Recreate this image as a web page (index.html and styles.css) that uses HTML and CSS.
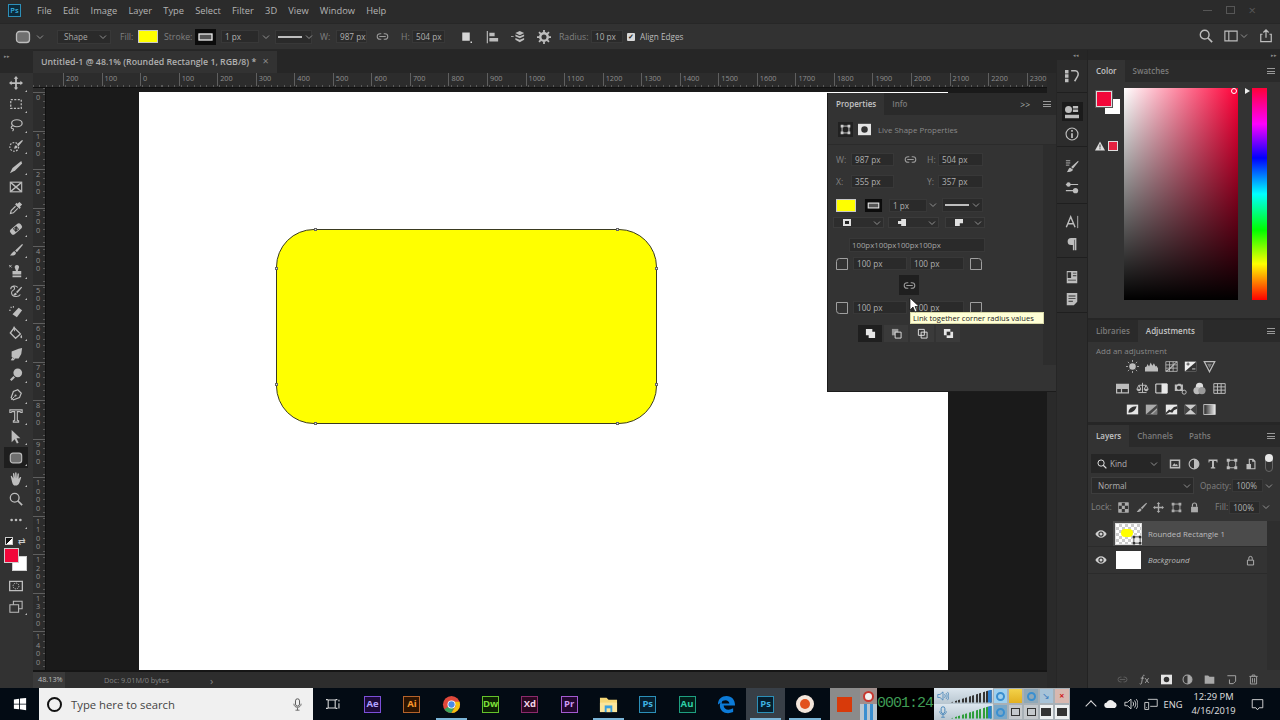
FILE: index.html
```html
<!DOCTYPE html>
<html lang="en">
<head>
<meta charset="utf-8">
<title>Photoshop</title>
<link rel="stylesheet" href="styles.css">
</head>
<body>
<svg class="defs" aria-hidden="true">
  <symbol id="i-move" viewBox="0 0 16 16"><path fill="currentColor" d="M8 0l2.600 3H9v4h4V5.400L16 8l-3 2.600V9H9v4h1.600L8 16l-2.600-3H7V9H3v1.600L0 8l3-2.600V7h4V3H5.400z"/></symbol>
  <symbol id="i-marquee" viewBox="0 0 16 16"><rect x="2" y="3" width="12" height="10" fill="none" stroke="currentColor" stroke-width="1.400" stroke-dasharray="2.400 1.600"/></symbol>
  <symbol id="i-square" viewBox="0 0 16 16"><rect x="3" y="2" width="10" height="11" fill="currentColor"/><path d="M14 14h2v2h-2z" fill="currentColor"/></symbol>
  <symbol id="i-lasso" viewBox="0 0 16 16"><ellipse cx="9" cy="6" rx="6" ry="4" fill="none" stroke="currentColor" stroke-width="1.400"/><path d="M4 9c-2 1-2 3 0 3s1 2 0 3" fill="none" stroke="currentColor" stroke-width="1.300"/></symbol>
  <symbol id="i-quick" viewBox="0 0 16 16"><circle cx="6" cy="9" r="5" fill="none" stroke="currentColor" stroke-width="1.400" stroke-dasharray="2 1.500"/><path fill="currentColor" d="M15 1L9 6l2 2 5-6zM8 7c-2 1-2 3-2 4 2 0 3-1 4-2z"/></symbol>
  <symbol id="i-slice" viewBox="0 0 16 16"><path fill="currentColor" d="M14 1l1 3-8 8-6 3 3-6z"/></symbol>
  <symbol id="i-frame" viewBox="0 0 16 16"><rect x="1.500" y="2.500" width="13" height="11" fill="none" stroke="currentColor" stroke-width="1.300"/><path d="M2 3l12 10M14 3L2 13" stroke="currentColor" stroke-width="1.500"/></symbol>
  <symbol id="i-dropper" viewBox="0 0 16 16"><path fill="currentColor" d="M12 1l3 3-2.500 2.500 1 1-1.500 1.500-5-5L8.500 2l1 1z"/><path fill="none" stroke="currentColor" stroke-width="1.300" d="M7.500 6L2.500 11l-.8 3.300 3.300-.8 5-5"/></symbol>
  <symbol id="i-heal" viewBox="0 0 16 16"><g transform="rotate(-40 8 8)"><rect x="0.500" y="4.500" width="15" height="7" rx="2.500" fill="currentColor"/><rect x="5.500" y="5.500" width="5" height="5" fill="#333"/><circle cx="7" cy="7" r=".6" fill="#ddd"/><circle cx="9" cy="9" r=".6" fill="#ddd"/></g></symbol>
  <symbol id="i-brush" viewBox="0 0 16 16"><path fill="currentColor" d="M15 1L7 8.500l2 2L16 2zM6.500 9.500C4 9.500 3.500 12.500 1 14c3 1 7 0 7-3z"/></symbol>
  <symbol id="i-stamp" viewBox="0 0 16 16"><path fill="currentColor" d="M9 1a2.500 2.500 0 0 1 2 4l-1 3h4v4H4V8h4L7 5a2.500 2.500 0 0 1 2-4zM4 13h10v2H4z"/><path d="M0 1l3 3M3 1L0 4" stroke="currentColor" stroke-width="1"/></symbol>
  <symbol id="i-history" viewBox="0 0 16 16"><path fill="none" stroke="currentColor" stroke-width="1.200" d="M2 6c0-4 6-5 8-2M3 3c3-1 5 2 2 4-2 1-3 3-1 6 2 2 7 2 9-1"/><path fill="currentColor" d="M14 3L8 9l1.500 1.500L15 4zM7.500 10c-1 0-2 2-3 3 2 .5 4 0 4.500-1.500z"/></symbol>
  <symbol id="i-eraser" viewBox="0 0 16 16"><path fill="currentColor" d="M11 3l4 3-6 8-5-3.500z"/><path d="M2 2l.8 1.500M0 6h2M5 1v2" stroke="currentColor" stroke-width="1.200"/></symbol>
  <symbol id="i-bucket" viewBox="0 0 16 16"><path fill="none" stroke="currentColor" stroke-width="1.500" d="M6 2L1.500 8l6 6L13 9z"/><path fill="currentColor" d="M14 10c-1 2-1.500 3-.2 4 1.500 0 1.700-2 .2-4zM5 1l1-1 1 6H6z"/></symbol>
  <symbol id="i-smudge" viewBox="0 0 16 16"><path fill="currentColor" d="M15 1l-1 7-3 5H5L3 11V5l8-3zM4 12l-2 3 3 .5 2-2z"/></symbol>
  <symbol id="i-dodge" viewBox="0 0 16 16"><circle cx="10" cy="5.500" r="5" fill="currentColor"/><path d="M6 10l-4 4" stroke="currentColor" stroke-width="2.400"/></symbol>
  <symbol id="i-pen" viewBox="0 0 16 16"><path fill="none" stroke="currentColor" stroke-width="1.400" d="M10 2l4 4-2 5-7 2.500L2.500 11 5 4z"/><circle cx="7.500" cy="8.500" r="1.200" fill="currentColor"/><path d="M2.500 13.500l4-4" stroke="currentColor"/></symbol>
  <symbol id="i-type" viewBox="0 0 16 16"><path fill="none" stroke="currentColor" stroke-width="1.300" d="M1 1h14v3h-1.500l-.8-1H9.500v10l1.500.6V15H5v-1.400l1.500-.6V3H3.300l-.8 1H1z"/></symbol>
  <symbol id="i-arrow" viewBox="0 0 16 16"><path fill="currentColor" d="M3 0v14l3.500-3.500 2.500 5 2-1-2.400-5H13z"/></symbol>
  <symbol id="i-rrect" viewBox="0 0 16 16"><rect x="1.500" y="2.500" width="13" height="11" rx="3" fill="#6f6f6f" stroke="currentColor" stroke-width="1.300"/></symbol>
  <symbol id="i-hand" viewBox="0 0 16 16"><path fill="currentColor" d="M3 9l-1-4c0-1 1.300-1 1.500 0L5 7.500 4.500 2c0-1 1.500-1 1.600 0L7 7V1c0-1 1.600-1 1.600 0L9 7l.8-5c.2-1 1.600-.8 1.500.2L11 8l1.500-2c.7-.8 1.800 0 1.300.9L12 12c-1 2.500-2 3.500-4.500 3.500S4 14 3 9z"/></symbol>
  <symbol id="i-zoom" viewBox="0 0 16 16"><circle cx="6.500" cy="6.500" r="5" fill="none" stroke="currentColor" stroke-width="1.500"/><path d="M10 10l5 5" stroke="currentColor" stroke-width="2"/></symbol>
  <symbol id="i-dots" viewBox="0 0 16 16"><circle cx="3" cy="8" r="1.500" fill="currentColor"/><circle cx="8" cy="8" r="1.500" fill="currentColor"/><circle cx="13" cy="8" r="1.500" fill="currentColor"/></symbol>
  <symbol id="i-quickmask" viewBox="0 0 16 16"><path fill="currentColor" fill-rule="evenodd" d="M0 2h16v12H0zM1.500 3.500v9h13v-9z"/><circle cx="8" cy="8" r="3.300" fill="none" stroke="currentColor" stroke-width="1.100" stroke-dasharray="1.500 1"/></symbol>
  <symbol id="i-screen" viewBox="0 0 16 16"><path fill="#333" stroke="currentColor" stroke-width="1.200" d="M5 1.500h10v8.500H5z"/><path fill="#333" stroke="currentColor" stroke-width="1.200" d="M1 5.500h10v8.500H1z"/></symbol>
  <symbol id="i-chev" viewBox="0 0 8 8"><path d="M1 2.500l3 3 3-3" fill="none" stroke="currentColor" stroke-width="1"/></symbol>
  <symbol id="i-link" viewBox="0 0 16 10"><path fill="none" stroke="currentColor" stroke-width="1.300" d="M6.500 1.500H5a3.500 3.500 0 0 0 0 7h1.500M9.500 1.500H11a3.500 3.500 0 0 1 0 7H9.500M4 5h8"/></symbol>
  <symbol id="i-stroke" viewBox="0 0 21 16"><rect width="21" height="16" fill="#0c0c0c"/><rect x="4" y="5" width="13" height="6" fill="#555" stroke="#eee" stroke-width="1.300"/></symbol>
  <symbol id="i-line" viewBox="0 0 24 4"><path d="M0 2h24" stroke="#fff" stroke-width="1.400"/></symbol>
  <symbol id="i-align" viewBox="0 0 16 16"><path fill="currentColor" d="M2 1h1.300v14H2zM5 3h6v4H5zM5 9h10v4H5z"/></symbol>
  <symbol id="i-stack" viewBox="0 0 16 16"><path fill="currentColor" d="M10 1l5 2.500L10 6 5 3.500zM10 7l5-2v2l-5 2.500L5 7V5zM10 11l5-2v2l-5 3-5-3V9zM0 7h3v1H0z"/></symbol>
  <symbol id="i-gear" viewBox="0 0 16 16"><circle cx="8" cy="8" r="4.300" fill="none" stroke="currentColor" stroke-width="2.800"/><path d="M8 0v3M8 13v3M0 8h3M13 8h3M2.300 2.300l2 2M11.700 11.700l2 2M13.700 2.300l-2 2M4.300 11.700l-2 2" stroke="currentColor" stroke-width="2"/></symbol>
  <symbol id="i-search" viewBox="0 0 16 16"><circle cx="6.500" cy="6.500" r="5" fill="none" stroke="currentColor" stroke-width="1.600"/><path d="M10 10l5 5" stroke="currentColor" stroke-width="2"/></symbol>
  <symbol id="i-workspace" viewBox="0 0 16 16"><path fill="none" stroke="currentColor" stroke-width="1.300" d="M1 2.500h14v11H1zM5.500 3v10"/></symbol>
  <symbol id="i-share" viewBox="0 0 16 16"><path fill="none" stroke="currentColor" stroke-width="1.400" d="M4 6H2v8.500h12V6h-2M8 10V1M5 4l3-3 3 3"/></symbol>
  <symbol id="i-hist" viewBox="0 0 16 16"><path fill="currentColor" d="M0 1h4v4H0zM0 6h4v4H0zM0 11h4v4H0z"/><path fill="none" stroke="currentColor" stroke-width="1.700" d="M7 2h5c3 0 4 4 2 7l-3 5"/></symbol>
  <symbol id="i-props" viewBox="0 0 16 16"><circle cx="4" cy="5" r="4" fill="currentColor"/><path fill="currentColor" d="M9 1h6v3H9zM9 5h6v3H9zM0 11h16v4H0z"/></symbol>
  <symbol id="i-info" viewBox="0 0 16 16"><circle cx="8" cy="8" r="6.800" fill="none" stroke="currentColor" stroke-width="1.300"/><path fill="currentColor" d="M7 3.500h2v2H7zM7 7h2v5.500H7z"/></symbol>
  <symbol id="i-brushset" viewBox="0 0 16 16"><path fill="currentColor" d="M15 2L7 9l2 2 6.500-8zM6 10c-2 0-2 3-4 5 4 0 7-1 7-3z"/><path d="M1 2h5M1 4.500h5M1 7h4" stroke="currentColor"/></symbol>
  <symbol id="i-sliders" viewBox="0 0 16 16"><path d="M1 4h14M1 11h14" stroke="currentColor" stroke-width="1.300"/><circle cx="4" cy="4" r="2.500" fill="currentColor"/><circle cx="12" cy="11" r="3" fill="currentColor"/></symbol>
  <symbol id="i-charA" viewBox="0 0 16 16"><path fill="none" stroke="currentColor" stroke-width="1.600" d="M1.500 14L6.500 2l5 12M3.500 10h6"/><path d="M14.500 1v14" stroke="currentColor"/></symbol>
  <symbol id="i-para" viewBox="0 0 16 16"><path fill="currentColor" d="M13 1H7a4 4 0 0 0 0 8h2v6h1.800V3h.6v12H13z"/></symbol>
  <symbol id="i-glyph" viewBox="0 0 16 16"><path fill="currentColor" fill-rule="evenodd" d="M2 1h12v14H2zM3 2.500V9h4V2.500zM9 3v1h4V3zM9 6v1h4V6zM3.500 11v1h9v-1z"/></symbol>
  <symbol id="i-note" viewBox="0 0 16 16"><path fill="currentColor" fill-rule="evenodd" d="M2 1h12v10l-4 4H2zM4 4v1h8V4zM4 7v1h8V7zM4 10v1h5v-1z"/></symbol>
  <symbol id="i-cornerTL" viewBox="0 0 12 12"><path fill="none" stroke="currentColor" d="M3.500.5h8v11H.5V3.500a3 3 0 0 1 3-3z"/></symbol>
  <symbol id="i-cornerTR" viewBox="0 0 12 12"><path fill="none" stroke="currentColor" d="M.5.5h8a3 3 0 0 1 3 3v8H.5z"/></symbol>
  <symbol id="i-cornerBL" viewBox="0 0 12 12"><path fill="none" stroke="currentColor" d="M.5.5h11v11h-8a3 3 0 0 1-3-3z"/></symbol>
  <symbol id="i-cornerBR" viewBox="0 0 12 12"><path fill="none" stroke="currentColor" d="M.5.5h11v8a3 3 0 0 1-3 3h-8z"/></symbol>
  <symbol id="i-transform" viewBox="0 0 16 16"><rect x="3" y="3" width="10" height="10" fill="none" stroke="currentColor" stroke-width="1.300"/><path fill="currentColor" d="M1 1h4v4H1zM11 1h4v4h-4zM1 11h4v4H1zM11 11h4v4h-4z"/></symbol>
  <symbol id="i-mask" viewBox="0 0 16 16"><path fill="#e4e4e4" d="M0 1h16v14H0z"/><circle cx="8" cy="8" r="4" fill="#333"/></symbol>
  <symbol id="i-alert" viewBox="0 0 10 10"><path fill="#ddd" d="M5 .5l5 9H0z"/><path fill="#333" d="M4.500 3.500h1v3h-1zM4.500 7.200h1v1h-1z"/></symbol>
  <symbol id="i-op1" viewBox="0 0 12 12"><path fill="#e6e6e6" d="M1 1h7v3h3v7H4V8H1z"/></symbol>
  <symbol id="i-op2" viewBox="0 0 12 12"><path fill="#999" d="M1 1h7v7H1z"/><path fill="#333" stroke="#e6e6e6" d="M4.500 4.500h6.500v6.500H4.500z"/></symbol>
  <symbol id="i-op3" viewBox="0 0 12 12"><path fill="none" stroke="#e6e6e6" d="M1.500 1.500h6.500v6.500H1.500zM4.500 4.500h6.500v6.500H4.500z"/></symbol>
  <symbol id="i-op4" viewBox="0 0 12 12"><path fill="#e6e6e6" d="M1 1h7v3h3v7H4V8H1z"/><path fill="#333" d="M4 4h4v4H4z"/></symbol>
  <symbol id="i-sun" viewBox="0 0 16 16"><circle cx="8" cy="8" r="4" fill="currentColor"/><path stroke="currentColor" d="M8 0v2.500M8 13.500V16M0 8h2.500M13.500 8H16M2.300 2.300L4 4M12 12l1.700 1.700M13.700 2.300L12 4M4 12l-1.700 1.700"/></symbol>
  <symbol id="i-levels" viewBox="0 0 16 16"><path fill="currentColor" d="M0 14V9l2-1 1-3 2 3 2-5 2 4 2-3 2 4 1-1 2 3v4z"/></symbol>
  <symbol id="i-curves" viewBox="0 0 16 16"><path fill="none" stroke="currentColor" d="M1 2h14v12H1zM1 6h14M1 10h14M5.500 2v12M10 2v12"/><path fill="none" stroke="currentColor" stroke-width="1.300" d="M1 14C7 12 9 6 15 2"/></symbol>
  <symbol id="i-expo" viewBox="0 0 16 16"><path fill="#eee" d="M1 2h14v12H1z"/><path fill="#333" d="M1 14L15 2v12z"/><path stroke="#333" d="M3 5h4M5 3v4"/><path stroke="#eee" d="M10 11h4"/></symbol>
  <symbol id="i-vibr" viewBox="0 0 16 16"><path fill="none" stroke="currentColor" stroke-width="1.500" d="M1.500 2h13L8 14.500z"/><path fill="currentColor" d="M5 4.500h6L8 10z" opacity=".5"/></symbol>
  <symbol id="i-hsl" viewBox="0 0 16 16"><path fill="currentColor" fill-rule="evenodd" d="M0 2h16v12H0zM1.500 8.500v4H6v-4zM7.500 8.500v4h7v-4z"/></symbol>
  <symbol id="i-balance" viewBox="0 0 16 16"><path fill="none" stroke="currentColor" stroke-width="1.200" d="M8 1v12M3 13h10M3.500 4L1 9h5zM12.500 4L10 9h5zM3.500 4h9"/><path fill="currentColor" d="M1 9a2.500 2.500 0 0 0 5 0zM10 9a2.500 2.500 0 0 0 5 0z"/></symbol>
  <symbol id="i-bw" viewBox="0 0 16 16"><path fill="#e8e8e8" d="M8 2h7v12H8z"/><path fill="none" stroke="#e8e8e8" stroke-width="1.200" d="M1 2.500h14v11H1z"/></symbol>
  <symbol id="i-camera" viewBox="0 0 16 16"><path fill="currentColor" fill-rule="evenodd" d="M1 3h3l1-1h3l1 1h2v8H1zM6 4.500a2.500 2.500 0 1 0 0 5 2.500 2.500 0 0 0 0-5z"/><circle cx="12.500" cy="12.500" r="2.500" fill="none" stroke="currentColor" stroke-width="1.200"/></symbol>
  <symbol id="i-mixer" viewBox="0 0 16 16"><circle cx="8" cy="5.500" r="4.500" fill="#ddd"/><circle cx="5" cy="10.500" r="4.500" fill="#bbb"/><circle cx="11" cy="10.500" r="4.500" fill="#999"/></symbol>
  <symbol id="i-lookup" viewBox="0 0 16 16"><path fill="none" stroke="currentColor" stroke-width="1.200" d="M1 2h14v12H1zM1 6h14M1 10h14M5.500 2v12M10 2v12"/></symbol>
  <symbol id="i-inv" viewBox="0 0 16 16"><path fill="#e6e6e6" d="M1 2h14v12H1z"/><path fill="#333" d="M3 12c0-4 3-8 10-8-1 4-4 8-10 8z"/></symbol>
  <symbol id="i-post" viewBox="0 0 16 16"><path fill="#aaa" d="M1 2h14v12H1z"/><path fill="#444" d="M1 14L15 2v4L6 14z"/><path fill="#777" d="M15 8v6H9z"/></symbol>
  <symbol id="i-thresh" viewBox="0 0 16 16"><path fill="#e8e8e8" d="M1 2h14v12H1z"/><path fill="#333" d="M1 12l4-4 2 1 4-4 4-1v3l-4 2-2 3-3-1-5 3z"/></symbol>
  <symbol id="i-selcol" viewBox="0 0 16 16"><path fill="#ccc" d="M1 2h14v12H1z"/><path fill="#444" d="M1 2l7 6-7 6zM15 2L8 8l7 6z"/></symbol>
  <symbol id="i-gradmap" viewBox="0 0 16 16"><defs><linearGradient id="gm"><stop offset="0" stop-color="#222"/><stop offset="1" stop-color="#eee"/></linearGradient></defs><rect x="1" y="2" width="14" height="12" fill="url(#gm)" stroke="#ddd"/></symbol>
  <symbol id="i-eye" viewBox="0 0 16 12"><path fill="currentColor" fill-rule="evenodd" d="M8 1c3.500 0 6 2.500 7.500 5C14 8.500 11.500 11 8 11S2 8.500.5 6C2 3.500 4.500 1 8 1zm0 1.500a3.500 3.500 0 1 0 0 7 3.500 3.500 0 0 0 0-7z"/><circle cx="8" cy="6" r="2" fill="currentColor"/></symbol>
  <symbol id="i-image" viewBox="0 0 16 16"><path fill="currentColor" fill-rule="evenodd" d="M1 2h14v12H1zM3 4v8h10V4z"/><path fill="currentColor" d="M4 11l3-4 2 2 1.500-1 1.500 3z"/></symbol>
  <symbol id="i-adj" viewBox="0 0 16 16"><circle cx="8" cy="8" r="6.500" fill="none" stroke="currentColor" stroke-width="1.500"/><path fill="currentColor" d="M8 1.500a6.500 6.500 0 0 1 0 13z M3 12L13 4"/></symbol>
  <symbol id="i-t" viewBox="0 0 16 16"><path fill="currentColor" d="M2 2h12v4h-1l-.6-2H9.300v8l1.700.7V14H5v-1.300l1.700-.7V4H3.600L3 6H2z"/></symbol>
  <symbol id="i-smart" viewBox="0 0 16 16"><path fill="currentColor" fill-rule="evenodd" d="M5 1h6l3 3v11H2V8h3zM6.500 2.500V8H8v5.500h4.500V5h-3V2.500z"/></symbol>
  <symbol id="i-checker" viewBox="0 0 16 16"><path fill="currentColor" d="M1 1h4.500v4.500H1zM5.500 5.500H10V10H5.500zM10 1h5v4.500h-5zM1 10h4.500v5H1zM10 10h5v5h-5z"/><rect x="1" y="1" width="14" height="14" fill="none" stroke="currentColor"/></symbol>
  <symbol id="i-lock" viewBox="0 0 16 16"><path fill="currentColor" d="M3 7h10v8H3z"/><path fill="none" stroke="currentColor" stroke-width="1.700" d="M5 7V4.500a3 3 0 0 1 6 0V7"/></symbol>
  <symbol id="i-lockline" viewBox="0 0 16 16"><path fill="none" stroke="currentColor" stroke-width="1.300" d="M3.500 7.500h9v7h-9zM5.500 7V4.500a2.500 2.500 0 0 1 5 0V7"/></symbol>
  <symbol id="i-fx" viewBox="0 0 16 16"><path fill="none" stroke="currentColor" stroke-width="1.300" d="M8 2C6 1 5.500 3 5 6l-1.200 7C3.500 15 2 15 1 14M2.500 6H7.500M9 6l5 7M14 6l-5 7"/></symbol>
  <symbol id="i-folder" viewBox="0 0 16 16"><path fill="currentColor" d="M1 2h5l2 2h7v10H1z"/></symbol>
  <symbol id="i-new" viewBox="0 0 16 16"><path fill="none" stroke="currentColor" stroke-width="1.400" d="M2 2.500h12v8l-3.500 3.500H5V8"/></symbol>
  <symbol id="i-trash" viewBox="0 0 16 16"><path fill="none" stroke="currentColor" stroke-width="1.300" d="M3.500 4v10.500h9V4M2 3.500h12M6 3V1.500h4V3M6.500 6v6.500M9.500 6v6.500"/></symbol>
  <symbol id="i-win" viewBox="0 0 16 16"><path fill="currentColor" d="M1 2.800l6-.8v5.600H1zM8 1.800L15 1v6.600H8zM1 8.500h6v5.600l-6-.8zM8 8.500h7V15l-7-.9z"/></symbol>
  <symbol id="i-mic" viewBox="0 0 16 16"><rect x="5.500" y="1" width="5" height="9" rx="2.500" fill="none" stroke="currentColor" stroke-width="1.200"/><path d="M3.500 7c0 6 9 6 9 0M8 12v3M5.500 15h5" fill="none" stroke="currentColor"/></symbol>
  <symbol id="i-task" viewBox="0 0 16 16"><path fill="none" stroke="currentColor" stroke-width="1.200" d="M2.500 3.500h8v9h-8zM0 3h2M0 13h2M11 3h2M11 13h2"/><path d="M14.800 3v2M14.800 7v6" stroke="currentColor" stroke-width="1.200"/></symbol>
  <symbol id="i-speaker" viewBox="0 0 16 16"><path fill="none" stroke="currentColor" d="M1 6h3l4-3.500v11L4 10H1zM10 5.500c1.300 1.500 1.300 3.500 0 5M12 4c2 2.500 2 5.500 0 8M14 2.500c2.500 3 2.500 8 0 11"/></symbol>
  <symbol id="i-cloud" viewBox="0 0 18 12"><path fill="currentColor" d="M4 11a3.500 3.500 0 0 1-.5-7A5.500 5.500 0 0 1 13 3.500 4 4 0 0 1 14 11z"/></symbol>
  <symbol id="i-net" viewBox="0 0 18 16"><path fill="none" stroke="currentColor" stroke-width="1.100" d="M5 2h12v9H8M1 6h5v9H1zM3 12.500h1"/></symbol>
  <symbol id="i-notify" viewBox="0 0 16 16"><path fill="none" stroke="currentColor" stroke-width="1.100" d="M1.500 2h13v10H10l-2 2.500L6 12H1.500z"/></symbol>
</svg>

<div class="app">
  <header class="menubar">
    <span class="pslogo">Ps</span>
    <nav class="menus">
      <span>File</span><span>Edit</span><span>Image</span><span>Layer</span><span>Type</span><span>Select</span><span>Filter</span><span>3D</span><span>View</span><span>Window</span><span>Help</span>
    </nav>
    <div class="winctl"><i class="wmin"></i><i class="wmax"></i><i class="wclose">×</i></div>
  </header>

  <div class="options">
    <svg class="ico16 o-shape"><use href="#i-rrect"/></svg>
    <svg class="chev o-chev1"><use href="#i-chev"/></svg>
    <div class="drop o-sel"><span>Shape</span><svg class="chev"><use href="#i-chev"/></svg></div>
    <label class="lbl o-fill">Fill:</label>
    <div class="swatch o-swatch"></div>
    <label class="lbl o-stroke">Stroke:</label>
    <svg class="strokeic o-strokeic"><use href="#i-stroke"/></svg>
    <div class="field o-w1">1 px</div>
    <svg class="chev o-chev2"><use href="#i-chev"/></svg>
    <div class="linebox o-line"><svg class="lineic"><use href="#i-line"/></svg><svg class="chev"><use href="#i-chev"/></svg></div>
    <label class="lbl o-wl">W:</label>
    <div class="field o-wv">987 px</div>
    <svg class="linkic o-link"><use href="#i-link"/></svg>
    <label class="lbl o-hl">H:</label>
    <div class="field o-hv">504 px</div>
    <svg class="ico12 o-pop"><use href="#i-square"/></svg>
    <svg class="ico14 o-align"><use href="#i-align"/></svg>
    <svg class="ico14 o-stack"><use href="#i-stack"/></svg>
    <svg class="ico14 o-gear"><use href="#i-gear"/></svg>
    <label class="lbl o-rad">Radius:</label>
    <div class="field o-radv">10 px</div>
    <span class="check o-check">✓</span>
    <span class="bright o-edges">Align Edges</span>
    <div class="o-right">
      <svg class="ico14 o-r-search"><use href="#i-search"/></svg>
      <svg class="ico14"><use href="#i-workspace"/></svg>
      <svg class="chev"><use href="#i-chev"/></svg>
      <svg class="ico14 o-share"><use href="#i-share"/></svg>
    </div>
  </div>

  <main class="work">
    <aside class="toolbar">
      <div class="tool-top"><b>▸▸</b></div>
      <div class="tool more"><svg><use href="#i-move"/></svg></div>
      <div class="tool more"><svg><use href="#i-marquee"/></svg></div>
      <div class="tool more"><svg><use href="#i-lasso"/></svg></div>
      <div class="tool more"><svg><use href="#i-quick"/></svg></div>
      <div class="tool more"><svg><use href="#i-slice"/></svg></div>
      <div class="tool"><svg><use href="#i-frame"/></svg></div>
      <div class="tool more"><svg><use href="#i-dropper"/></svg></div>
      <div class="tool more"><svg><use href="#i-heal"/></svg></div>
      <div class="tool more"><svg><use href="#i-brush"/></svg></div>
      <div class="tool more"><svg><use href="#i-stamp"/></svg></div>
      <div class="tool more"><svg><use href="#i-history"/></svg></div>
      <div class="tool more"><svg><use href="#i-eraser"/></svg></div>
      <div class="tool more"><svg><use href="#i-bucket"/></svg></div>
      <div class="tool more"><svg><use href="#i-smudge"/></svg></div>
      <div class="tool more"><svg><use href="#i-dodge"/></svg></div>
      <div class="tool more"><svg><use href="#i-pen"/></svg></div>
      <div class="tool more"><svg><use href="#i-type"/></svg></div>
      <div class="tool more"><svg><use href="#i-arrow"/></svg></div>
      <div class="tool more active"><svg><use href="#i-rrect"/></svg></div>
      <div class="tool more"><svg><use href="#i-hand"/></svg></div>
      <div class="tool"><svg><use href="#i-zoom"/></svg></div>
      <div class="tool more"><svg><use href="#i-dots"/></svg></div>
      <div class="mini"><span class="mini-def"></span><span class="mini-swap">⇄</span></div>
      <div class="colors"><span class="c-bg"></span><span class="c-fg"></span></div>
      <div class="tool tool-q"><svg><use href="#i-quickmask"/></svg></div>
      <div class="tool more"><svg><use href="#i-screen"/></svg></div>
    </aside>

    <section class="center">
      <div class="tabs">
        <div class="tab">Untitled-1 @ 48.1% (Rounded Rectangle 1, RGB/8) * <span class="tabx">×</span></div>
      </div>
      <div class="doc">
        <div class="hruler">
          <span>200</span><span>100</span><span>0</span><span>100</span><span>200</span><span>300</span><span>400</span><span>500</span><span>600</span><span>700</span><span>800</span><span>900</span><span>1000</span><span>1100</span><span>1200</span><span>1300</span><span>1400</span><span>1500</span><span>1600</span><span>1700</span><span>1800</span><span>1900</span><span>2000</span><span>2100</span><span>2200</span><span>2300</span>
        </div>
        <div class="docrow">
          <div class="vruler">
            <span>0</span><span>100</span><span>200</span><span>300</span><span>400</span><span>500</span><span>600</span><span>700</span><span>800</span><span>900</span><span>1000</span><span>1100</span><span>1200</span><span>1300</span><span>1400</span>
          </div>
          <div class="canvas">
            <div class="paper"></div>
            <div class="rrect">
              <i class="pt p1"></i><i class="pt p2"></i><i class="pt p3"></i><i class="pt p4"></i>
              <i class="pt p5"></i><i class="pt p6"></i><i class="pt p7"></i><i class="pt p8"></i>
            </div>
          </div>
        </div>
        <div class="status"><span class="zoomv">48.13%</span><span class="docinfo">Doc: 9.01M/0 bytes</span><span class="statarrow">›</span></div>
      </div>

      <div class="props">
        <div class="ptabs">
          <span class="ptab on">Properties</span><span class="ptab">Info</span>
          <span class="ptools">&gt;&gt; <i class="burger"></i></span>
        </div>
        <div class="plive">
          <span class="pbtn"><svg><use href="#i-transform"/></svg></span>
          <svg class="pmask"><use href="#i-mask"/></svg>
          <span>Live Shape Properties</span>
        </div>
        <div class="pbody">
          <div class="prow r-wh">
            <label class="lbl pl">W:</label><div class="field pw">987 px</div>
            <svg class="linkic plink"><use href="#i-link"/></svg>
            <label class="lbl pl2">H:</label><div class="field pw2">504 px</div>
          </div>
          <div class="prow r-xy">
            <label class="lbl pl">X:</label><div class="field pw">355 px</div>
            <span class="plink"></span>
            <label class="lbl pl2">Y:</label><div class="field pw2">357 px</div>
          </div>
          <div class="prow r-stroke">
            <div class="swatch pswatch"></div>
            <svg class="strokeic"><use href="#i-stroke"/></svg>
            <div class="field p1px">1 px</div>
            <svg class="chev pchev"><use href="#i-chev"/></svg>
            <div class="linebox pline"><svg class="lineic"><use href="#i-line"/></svg><svg class="chev"><use href="#i-chev"/></svg></div>
          </div>
          <div class="prow r-sel">
            <div class="minidrop md1"><i class="glyph g1"></i><svg class="chev"><use href="#i-chev"/></svg></div>
            <div class="minidrop md2"><i class="glyph g2"></i><svg class="chev"><use href="#i-chev"/></svg></div>
            <div class="minidrop md3"><i class="glyph g3"></i><svg class="chev"><use href="#i-chev"/></svg></div>
          </div>
          <div class="field pcss">100px100px100px100px</div>
          <div class="prow r-corner">
            <svg class="corner"><use href="#i-cornerTL"/></svg>
            <div class="field pcv">100 px</div>
            <div class="field pcv2">100 px</div>
            <svg class="corner"><use href="#i-cornerTR"/></svg>
          </div>
          <div class="plinkbtn"><svg class="linkic"><use href="#i-link"/></svg></div>
          <div class="prow r-corner r-corner2">
            <svg class="corner"><use href="#i-cornerBL"/></svg>
            <div class="field pcv">100 px</div>
            <div class="field pcv2">100 px</div>
            <svg class="corner"><use href="#i-cornerBR"/></svg>
          </div>
          <div class="pops">
            <span class="opbtn on"><svg><use href="#i-op1"/></svg></span>
            <span class="opbtn"><svg><use href="#i-op2"/></svg></span>
            <span class="opbtn"><svg><use href="#i-op3"/></svg></span>
            <span class="opbtn"><svg><use href="#i-op4"/></svg></span>
          </div>
        </div>
        <div class="pscroll"></div>
        <div class="tooltip">Link together corner radius values</div>
        <svg class="cursor" viewBox="0 0 10 15"><path d="M1 0v12l3-3 2 5 2-1-2-4.500h4z" fill="#fff" stroke="#111" stroke-width=".7"/></svg>
      </div>
    </section>

    <aside class="dock">
      <div class="docktop"><b>◂◂</b></div>
      <div class="dockgroup g-hist"><svg><use href="#i-hist"/></svg></div>
      <div class="dockgroup g-props"><span class="dockon"><svg><use href="#i-props"/></svg></span><svg><use href="#i-info"/></svg></div>
      <div class="dockgroup g-brush"><svg><use href="#i-brushset"/></svg><svg><use href="#i-sliders"/></svg></div>
      <div class="dockgroup g-char"><svg><use href="#i-charA"/></svg><svg><use href="#i-para"/></svg></div>
      <div class="dockgroup g-glyph"><svg><use href="#i-glyph"/></svg><svg><use href="#i-note"/></svg></div>
    </aside>

    <aside class="panels">
      <div class="docktop docktop-r"><b>▸▸</b></div>
      <section class="panel p-color">
        <div class="tabsrow"><span class="ptab on">Color</span><span class="ptab">Swatches</span><i class="burger"></i></div>
        <div class="colorbody">
          <div class="colorleft">
            <div class="bigswatch"><span class="s-bg"></span><span class="s-fg"></span></div>
            <div class="gamut"><svg><use href="#i-alert"/></svg><span></span></div>
          </div>
          <div class="picker"><i class="pick"></i></div>
          <div class="huewrap"><i class="huearrow"></i><div class="hue"></div></div>
        </div>
      </section>
      <section class="panel p-adj">
        <div class="tabsrow"><span class="ptab">Libraries</span><span class="ptab on">Adjustments</span><i class="burger"></i></div>
        <div class="adjtitle">Add an adjustment</div>
        <div class="adjrow"><svg><use href="#i-sun"/></svg><svg><use href="#i-levels"/></svg><svg><use href="#i-curves"/></svg><svg><use href="#i-expo"/></svg><svg><use href="#i-vibr"/></svg></div>
        <div class="adjrow"><svg><use href="#i-hsl"/></svg><svg><use href="#i-balance"/></svg><svg><use href="#i-bw"/></svg><svg><use href="#i-camera"/></svg><svg><use href="#i-mixer"/></svg><svg><use href="#i-lookup"/></svg></div>
        <div class="adjrow"><svg><use href="#i-inv"/></svg><svg><use href="#i-post"/></svg><svg><use href="#i-thresh"/></svg><svg><use href="#i-selcol"/></svg><svg><use href="#i-gradmap"/></svg></div>
      </section>
      <section class="panel p-layers">
        <div class="tabsrow"><span class="ptab on">Layers</span><span class="ptab">Channels</span><span class="ptab">Paths</span><i class="burger"></i></div>
        <div class="lrow l-kind">
          <div class="kind"><svg class="ico10"><use href="#i-search"/></svg><span>Kind</span><svg class="chev"><use href="#i-chev"/></svg></div>
          <div class="kindicons">
            <svg><use href="#i-image"/></svg><svg><use href="#i-adj"/></svg><svg><use href="#i-t"/></svg><svg><use href="#i-transform"/></svg><svg><use href="#i-smart"/></svg>
          </div>
          <span class="toggle"><i></i></span>
        </div>
        <div class="lrow l-blend">
          <div class="blend"><span>Normal</span><svg class="chev"><use href="#i-chev"/></svg></div>
          <label class="lbl lop">Opacity:</label><div class="field lval">100%</div><svg class="chev lchev"><use href="#i-chev"/></svg>
        </div>
        <div class="lrow l-lock">
          <label class="lbl llock">Lock:</label>
          <div class="lockicons"><svg><use href="#i-checker"/></svg><svg><use href="#i-brush"/></svg><svg><use href="#i-move"/></svg><svg><use href="#i-transform"/></svg><svg><use href="#i-lock"/></svg></div>
          <label class="lbl lfill">Fill:</label><div class="field lval">100%</div><svg class="chev lchev"><use href="#i-chev"/></svg>
        </div>
        <div class="layers">
          <div class="layer sel">
            <svg class="eye"><use href="#i-eye"/></svg>
            <div class="thumb shapethumb"><i class="blob"></i><svg class="mark"><use href="#i-transform"/></svg></div>
            <span class="lname">Rounded Rectangle 1</span>
          </div>
          <div class="layer">
            <svg class="eye"><use href="#i-eye"/></svg>
            <div class="thumb whitethumb"></div>
            <span class="lname it">Background</span>
            <svg class="layerlock"><use href="#i-lockline"/></svg>
          </div>
        </div>
        <div class="lfoot">
          <svg class="dim"><use href="#i-link"/></svg><svg><use href="#i-fx"/></svg><svg><use href="#i-mask"/></svg><svg><use href="#i-adj"/></svg><svg><use href="#i-folder"/></svg><svg><use href="#i-new"/></svg><svg><use href="#i-trash"/></svg>
        </div>
      </section>
    </aside>
  </main>

  <footer class="taskbar">
    <div class="start"><svg><use href="#i-win"/></svg></div>
    <div class="searchbox">
      <i class="cortana"></i><span>Type here to search</span><svg class="micic"><use href="#i-mic"/></svg>
    </div>
    <div class="tb tb-task"><svg class="taskic"><use href="#i-task"/></svg></div>
    <div class="tb"><span class="tile ae">Ae</span></div>
    <div class="tb"><span class="tile ai">Ai</span></div>
    <div class="tb run"><svg class="chrome" viewBox="0 0 20 20"><circle cx="10" cy="10" r="9" fill="#e0483b"/><path d="M10 10L2.500 15A9 9 0 0 0 10 19l4-8z" fill="#3ba55a"/><path d="M19 10a9 9 0 0 1-9 9l4.500-7.500L13 7h5.500z" fill="#f4c20d"/><circle cx="10" cy="10" r="4.200" fill="#fff"/><circle cx="10" cy="10" r="3.300" fill="#4a8ae8"/></svg></div>
    <div class="tb"><span class="tile dw">Dw</span></div>
    <div class="tb"><span class="tile xd">Xd</span></div>
    <div class="tb"><span class="tile pr">Pr</span></div>
    <div class="tb run"><svg class="explorer" viewBox="0 0 20 20"><path d="M1 3h7l2 2h9v13H1z" fill="#f6d776"/><path d="M1 8h18v10H1z" fill="#fbe59a"/><path d="M6 11h8v7H6z" fill="#3aa0e0"/><path d="M8 14h4v4H8z" fill="#fbe59a"/></svg></div>
    <div class="tb"><span class="tile ps">Ps</span></div>
    <div class="tb"><span class="tile au">Au</span></div>
    <div class="tb"><svg class="edge" viewBox="0 0 20 20"><path fill="#0c7bd8" d="M1 10C1 4 5 1 10 1c5.500 0 9 4 9 10H7c0 4 5 6 10 3v4c-7 3-14 0-14-7 0-2 1-4 3-5-1 1-1 2-1 3h8c0-4-6-5-9-1-1.500 1-2 2-3 2z"/></svg></div>
    <div class="tb run active"><span class="tile ps">Ps</span></div>
    <div class="tb run"><span class="rec"><i></i></span></div>
    <div class="stopbtn"><i></i></div>
    <div class="recbar">
      <div class="rb-col"><span class="alarm"><i></i></span><span class="pause"></span></div>
      <div class="timer">0001:24</div>
      <div class="rb-col vols">
        <div class="vol"><svg><use href="#i-speaker"/></svg><i class="bars"></i></div>
        <div class="vol"><svg><use href="#i-mic"/></svg><i class="bars green"></i></div>
      </div>
      <div class="rb-grid">
        <i class="rb blue"><b class="rb-dot"></b></i><i class="rb yellow"></i><i class="rb gear"><b class="rb-dot"></b></i><i class="rb blue2">↘</i><i class="rb red">×</i>
        <i class="rb cam"><b class="rb-dot"></b></i><i class="rb dark"><b class="rb-box"></b></i><i class="rb dark"><b class="rb-box"></b></i><i class="rb lite"><b class="rb-mon"></b></i><i class="rb lite"><b class="rb-mon"></b></i>
      </div>
    </div>
    <div class="tray">
      <span class="caret"></span>
      <svg class="tr-cloud"><use href="#i-cloud"/></svg>
      <svg class="tr-ic"><use href="#i-speaker"/></svg>
      <svg class="tr-ic"><use href="#i-net"/></svg>
      <span class="eng">ENG</span>
      <div class="clock"><span>12:29 PM</span><span>4/16/2019</span></div>
      <svg class="tr-notify"><use href="#i-notify"/></svg>
    </div>
  </footer>
</div>
</body>
</html>
```

FILE: styles.css
```css
* { box-sizing: border-box; }
html, body { margin: 0; width: 1280px; height: 720px; overflow: hidden; background: #2d2d2d; }
body { font-family: "Open Sans", "Liberation Sans", sans-serif; font-size: 9px; color: #b4b4b4; }
.defs { position: absolute; width: 0; height: 0; }
svg { display: block; flex: none; }
i { font-style: normal; display: block; flex: none; }
.app { display: flex; flex-direction: column; width: 1280px; height: 720px; }

/* menu */
.menubar { height: 23px; background: #2b2b2b; display: flex; align-items: center; padding: 0 0 3px 8px; flex: none; }
.pslogo { width: 13px; height: 13px; border: 1px solid #2d8fb8; color: #39b1e0; background: #0c2a3a; font-size: 7.500px; font-weight: 600; line-height: 11px; text-align: center; }
.menus { display: flex; gap: 11.200px; margin-left: 16px; font-size: 9.300px; color: #b4b4b4; }
.winctl { margin-left: auto; margin-right: 24px; display: flex; gap: 14px; align-items: center; opacity: .3; }
.wmin { width: 9px; height: 1px; background: #bbb; }
.wmax { width: 9px; height: 8px; border: 1px solid #bbb; }
.wclose { font-size: 13px; line-height: 9px; color: #bbb; }

/* options */
.options { height: 27px; background: #323232; border-top: 1px solid #272727; border-bottom: 1px solid #272727; display: flex; align-items: center; flex: none; padding-left: 15px; position: relative; color: #9a9a9a; }
.ico16 { width: 16px; height: 16px; color: #bdbdbd; }
.ico14 { width: 14px; height: 14px; color: #bdbdbd; }
.ico12 { width: 12px; height: 12px; color: #d6d6d6; }
.ico10 { width: 10px; height: 10px; color: #ddd; }
.chev { width: 8px; height: 8px; color: #8f8f8f; }
.lbl { color: #808080; font-size: 8.700px; white-space: nowrap; }
.bright { color: #bdbdbd; white-space: nowrap; }
.field { background: #2a2a2a; border: 1px solid #383838; color: #b0b0b0; font-size: 8.200px; height: 13px; line-height: 11px; padding-left: 3px; white-space: nowrap; flex: none; }
.drop { display: flex; align-items: center; justify-content: space-between; background: #2a2a2a; border: 1px solid #383838; height: 14px; padding: 0 3px 0 6px; color: #a6a6a6; font-size: 8.200px; }
.swatch { background: #ffff00; border: 1px solid #c8c8c8; height: 13px; }
.strokeic { width: 21px; height: 16px; }
.linebox { display: flex; align-items: center; gap: 3px; border: 1px solid #383838; background: #2a2a2a; height: 14px; padding-left: 2px; }
.lineic { width: 24px; height: 4px; }
.linkic { width: 13px; height: 9px; color: #9c9c9c; }
.check { width: 8px; height: 8px; background: #d8d8d8; color: #222; font-size: 7px; line-height: 8px; text-align: center; font-weight: 700; border-radius: 1px; }
.o-chev1 { margin-left: 5px; }
.o-sel { width: 54px; margin-left: 13px; }
.o-fill { margin-left: 9px; width: 18px; }
.o-swatch { width: 20px; }
.o-stroke { margin-left: 6px; width: 31px; }
.o-w1 { margin-left: 5px; width: 38px; }
.o-chev2 { margin-left: 3px; }
.o-line { margin-left: 5px; width: 37px; }
.o-wl { margin-left: 8px; width: 16px; }
.o-wv { width: 31px; }
.o-link { margin-left: 9px; }
.o-hl { margin-left: 12px; width: 11px; }
.o-hv { width: 33px; }
.o-pop { margin-left: 15px; }
.o-align { margin-left: 13px; }
.o-stack { margin-left: 12px; }
.o-gear { margin-left: 12px; }
.o-rad { margin-left: 8px; width: 32px; }
.o-radv { width: 32px; }
.o-check { margin-left: 4px; }
.o-edges { margin-left: 5px; font-size: 8.200px; }
.o-right { position: absolute; right: 7px; top: 5px; display: flex; align-items: center; gap: 2px; }
.o-r-search { margin-right: 9px; }
.o-share { margin-left: 9px; }

/* main */
.work { flex: 1; display: flex; min-height: 0; position: relative; }
.toolbar { width: 33px; background: #323232; display: flex; flex-direction: column; align-items: center; flex: none; position: relative; padding-right: 1px; }
.tool-top { height: 23px; width: 33px; margin-right: -1px; background: #282828; font-size: 5px; color: #8a8a8a; padding: 3px 0 0 4px; flex: none; }
.tool-top b { font-weight: 400; }
.tool { width: 24px; height: 20.800px; display: flex; align-items: center; justify-content: center; position: relative; color: #bdbdbd; flex: none; }
.tool svg { width: 14px; height: 14px; }
.tool.more::after { content: ""; position: absolute; right: 1px; bottom: 2px; border: 1.200px solid transparent; border-right-color: #bbb; border-bottom-color: #bbb; }
.tool.active { background: #1e1e1e; }
.mini { width: 24px; height: 12px; display: flex; align-items: center; justify-content: space-between; padding: 0 2px 0 1px; margin-top: 4px; }
.mini-def { width: 8px; height: 8px; background: linear-gradient(135deg,#111 50%,#fff 50%); border: 1px solid #ccc; }
.mini-swap { font-size: 9px; color: #ccc; line-height: 10px; }
.colors { width: 24px; height: 24px; position: relative; margin-top: 1px; }
.c-fg { position: absolute; left: 0; top: 0; width: 15px; height: 15px; background: #f2073a; border: 1px solid #cfcfcf; }
.c-bg { position: absolute; left: 8px; top: 8px; width: 15px; height: 15px; background: #fff; border: 1px solid #cfcfcf; }
.tool-q { margin-top: 4px; }

.center { flex: none; width: 1023px; display: flex; flex-direction: column; position: relative; background: #2a2a2a; }
.tabs { height: 23px; background: #262626; flex: none; padding-top: 1px; }
.tab { width: 244px; height: 22px; background: #323232; font-size: 8.800px; font-weight: 600; color: #b0b0b0; padding: 5px 0 0 8px; white-space: nowrap; }
.tabx { margin-left: 4px; color: #888; font-weight: 400; font-size: 11px; line-height: 9px; }
.doc { flex: 1; display: flex; flex-direction: column; margin-right: 9px; min-height: 0; }
.hruler { height: 15px; flex: none; display: flex; padding-left: 30px; background-color: #2c2c2c; background-image: repeating-linear-gradient(to right,#5a5a5a 0 1px,transparent 1px 6.425px); background-size: 100% 2px; background-repeat: no-repeat; background-position: 0 bottom; border-bottom: 1px solid #111; overflow: hidden; }
.hruler span { width: 38.550px; flex: none; border-left: 1px solid #5f5f5f; font-size: 7.300px; color: #8f8f8f; padding-left: 2px; line-height: 11px; height: 13px; }
.docrow { flex: 1; display: flex; min-height: 0; }
.vruler { width: 13px; flex: none; padding-top: 4px; background-color: #2c2c2c; background-image: repeating-linear-gradient(to bottom,#5a5a5a 0 1px,transparent 1px 6.425px); background-size: 2px 100%; background-repeat: no-repeat; background-position: right 0; border-right: 1px solid #111; overflow: hidden; }
.vruler span { display: block; height: 38.500px; border-top: 1px solid #5f5f5f; font-size: 7.300px; line-height: 8.600px; color: #8f8f8f; padding: 0 3px; word-break: break-all; width: 100%; }
.canvas { flex: 1; background: #1a1a1a; position: relative; overflow: hidden; }
.paper { position: absolute; left: 93px; top: 4px; width: 809px; bottom: 0; background: #fff; }
.rrect { position: absolute; left: 230px; top: 141px; width: 381px; height: 195px; background: #ffff00; border: 1px solid #3a3a20; border-radius: 38px; }
.pt { position: absolute; width: 3px; height: 3px; background: #e8e8e8; border: 1px solid #666; }
.p1 { left: 37px; top: -2px; } .p2 { right: 37px; top: -2px; } .p3 { left: 37px; bottom: -2px; } .p4 { right: 37px; bottom: -2px; }
.p5 { left: -2px; top: 37px; } .p6 { right: -2px; top: 37px; } .p7 { left: -2px; bottom: 37px; } .p8 { right: -2px; bottom: 37px; }
.status { height: 18px; flex: none; background: #2d2d2d; border-top: 2px solid #151515; display: flex; align-items: center; font-size: 7.300px; color: #858585; }
.zoomv { width: 32px; color: #bdbdbd; padding-left: 5px; background: #3a3a3a; height: 100%; line-height: 15px; }
.docinfo { margin-left: 39px; width: 106px; }
.statarrow { font-size: 11px; }

/* properties float */
.props { position: absolute; left: 794px; top: 43px; width: 229px; height: 299px; background: #333; border-left: 1px solid #1a1a1a; border-bottom: 1px solid #1c1c1c; }
.ptabs { height: 22px; background: #2a2a2a; display: flex; }
.ptab { font-size: 8px; color: #7a7a7a; padding: 0 8px; line-height: 22px; font-weight: 600; white-space: nowrap; height: 22px; }
.ptab.on { background: #333; color: #c4c4c4; }
.ptools { margin-left: auto; margin-right: 5px; display: flex; align-items: center; gap: 13px; color: #aaa; font-size: 8.500px; }
.burger { width: 8px; height: 6px; border-top: 1px solid #999; border-bottom: 1px solid #999; position: relative; background: linear-gradient(#999,#999) center/100% 1px no-repeat; }
.plive { height: 30px; padding-left: 10px; display: flex; align-items: center; gap: 4px; color: #8a8a8a; font-size: 7.900px; border-bottom: 1px solid #2b2b2b; }
.pbtn { width: 15px; height: 15px; background: #212121; display: flex; align-items: center; justify-content: center; color: #ccc; }
.pbtn svg { width: 11px; height: 11px; }
.pmask { width: 15px; height: 13px; margin-right: 2px; }
.pbody { display: flex; flex-direction: column; padding: 8px 0 0 6px; width: 216px; }
.prow { display: flex; align-items: center; }
.pl { width: 17px; padding-left: 2px; }
.pw { width: 43px; }
.plink { margin-left: 10px; width: 13px; margin-right: 10px; }
.pl2 { width: 11px; }
.pw2 { width: 45px; }
.r-wh { height: 13px; }
.r-xy { height: 13px; margin-top: 9px; }
.r-stroke { margin-top: 11px; height: 12px; }
.pswatch { width: 20px; margin-left: 2px; }
.r-stroke .strokeic { width: 21px; height: 13px; margin-left: 7px; }
.p1px { width: 38px; margin-left: 5px; }
.pchev { margin-left: 2px; }
.pline { width: 41px; margin-left: 5px; }
.r-sel { margin-top: 6px; height: 11px; }
.minidrop { height: 11px; border: 1px solid #3b3b3b; background: #2d2d2d; display: flex; align-items: center; justify-content: space-between; padding: 0 2px 0 9px; }
.md1 { width: 51px; margin-left: -1px; } .md2 { width: 51px; margin-left: 4px; } .md3 { width: 40px; margin-left: 6px; }
.glyph { width: 8px; height: 7px; background: #e0e0e0; }
.g1 { border: 2px solid #e0e0e0; background: #222; }
.g2 { clip-path: polygon(40% 0,100% 0,100% 100%,40% 100%,40% 70%,0 70%,0 30%,40% 30%); }
.g3 { clip-path: polygon(0 0,100% 0,100% 60%,60% 60%,60% 100%,0 100%); }
.pcss { width: 136px; margin: 10px 0 0 15px; font-size: 7.800px; height: 14px; line-height: 12px; color: #a6a6a6; padding-left: 2px; }
.r-corner { height: 13px; margin-top: 5px; }
.r-corner2 { margin-top: 6px; }
.corner { width: 12px; height: 12px; color: #9f9f9f; margin-left: 2px; }
.pcv { width: 54px; margin-left: 5px; padding-left: 3px; }
.pcv2 { width: 54px; margin-left: 3px; }
.r-corner .corner:last-child { margin-left: 6px; }
.plinkbtn { width: 20px; height: 20px; background: #1f1f1f; margin: 5px 0 0 65px; display: flex; align-items: center; justify-content: center; }
.pops { display: flex; gap: 2px; margin: 11px 0 0 24px; }
.opbtn { width: 24px; height: 17px; background: #3a3a3a; display: flex; align-items: center; justify-content: center; }
.opbtn.on { background: #1f1f1f; }
.opbtn svg { width: 11px; height: 11px; }
.pscroll { position: absolute; right: 0; top: 52px; width: 13px; height: 220px; background: #2d2d2d; }
.tooltip { position: absolute; left: 82px; top: 219px; width: 134px; height: 12px; background: #ffffd6; color: #222; font-size: 7.600px; line-height: 11px; padding-left: 2px; border: 1px solid #d8d8a8; white-space: nowrap; }
.cursor { position: absolute; left: 81px; top: 205px; width: 10px; height: 15px; }

/* dock */
.dock { width: 32px; background: #2c2c2c; flex: none; display: flex; flex-direction: column; color: #bdbdbd; border-left: 1px solid #262626; border-right: 1px solid #232323; }
.docktop { height: 10px; background: #262626; font-size: 5px; color: #8a8a8a; line-height: 10px; text-align: right; padding-right: 8px; flex: none; }
.docktop b { font-weight: 400; }
.dockgroup { display: flex; flex-direction: column; align-items: center; border-bottom: 1px solid #1f1f1f; flex: none; }
.dockgroup svg { width: 14px; height: 14px; }
.g-hist { height: 33px; justify-content: center; }
.g-props { height: 54px; padding-top: 9px; gap: 6px; }
.dockon { background: #1b1b1b; width: 21px; height: 19px; display: flex; align-items: center; justify-content: center; }
.g-brush { height: 57px; padding-top: 12px; gap: 8px; }
.g-char { height: 54px; padding-top: 11px; gap: 8px; }
.g-glyph { height: 55px; padding-top: 12px; gap: 8px; }

/* panels */
.panels { width: 192px; flex: none; display: flex; flex-direction: column; background: #262626; }
.docktop-r { padding-right: 3px; }
.panel { background: #333; display: flex; flex-direction: column; position: relative; flex: none; }
.tabsrow { height: 22px; background: #2a2a2a; display: flex; flex: none; position: relative; }
.tabsrow .burger { position: absolute; right: 5px; top: 8px; }
.p-color { height: 258px; }
.colorbody { display: flex; flex: 1; padding-top: 6px; position: relative; }
.colorleft { width: 36px; flex: none; }
.bigswatch { position: relative; height: 34px; margin-left: 7px; width: 26px; }
.s-fg { position: absolute; left: 1px; top: 3px; width: 16px; height: 16px; background: #f2073a; border: 1px solid #ddd; outline: 1px solid #555; }
.s-bg { position: absolute; left: 10px; top: 11px; width: 15px; height: 15px; background: #fff; }
.gamut { display: flex; gap: 3px; margin: 19px 0 0 7px; }
.gamut svg { width: 10px; height: 10px; }
.gamut span { width: 10px; height: 10px; background: #e3213f; border: 1px solid #ddd; }
.picker { width: 114px; height: 212px; background: linear-gradient(to bottom,transparent,#000), linear-gradient(to right,#fff,#ff0038); position: relative; flex: none; }
.pick { position: absolute; right: 1px; top: 0; width: 6px; height: 6px; border-radius: 50%; border: 1px solid #fff; }
.huewrap { position: relative; margin-left: 14px; }
.hue { width: 15px; height: 212px; background: linear-gradient(to bottom,#ff0038 0%,#ff00ff 17%,#0000ff 33%,#00ffff 50%,#00ff00 67%,#ffff00 83%,#ff0000 100%); }
.huearrow { position: absolute; left: -7px; top: 0; border-left: 5px solid #eee; border-top: 3px solid transparent; border-bottom: 3px solid transparent; }
.p-adj { height: 104px; border-top: 2px solid #262626; }
.adjtitle { font-size: 8px; color: #888; padding: 3px 0 0 8px; height: 14px; flex: none; }
.adjrow { display: flex; justify-content: center; gap: 6.300px; height: 21.500px; align-items: center; color: #bdbdbd; padding-right: 26px; flex: none; }
.adjrow svg { width: 13px; height: 13px; }
.p-layers { flex: 1; border-top: 3px solid #262626; position: relative; }
.lrow { display: flex; align-items: center; padding-left: 3px; }
.l-kind { height: 27px; margin-top: 3px; }
.kind { width: 70px; height: 19px; background: #262626; display: flex; align-items: center; padding: 0 3px 0 6px; gap: 3px; color: #b0b0b0; font-size: 8.200px; }
.kind .chev { margin-left: auto; }
.kindicons { display: flex; gap: 7px; margin-left: 8px; color: #bdbdbd; }
.kindicons svg { width: 12px; height: 12px; }
.toggle { margin-left: 8px; width: 8px; height: 16px; border: 1px solid #666; border-radius: 4px; position: relative; }
.toggle i { position: absolute; left: -1px; top: -3px; width: 8px; height: 8px; border-radius: 50%; background: #e8e8e8; }
.l-blend { height: 17px; }
.blend { width: 103px; height: 17px; background: #2a2a2a; border: 1px solid #3d3d3d; display: flex; align-items: center; justify-content: space-between; padding: 0 2px 0 6px; font-size: 8.200px; color: #b0b0b0; }
.lop { margin-left: 6px; width: 32px; font-size: 8.200px; }
.lval { width: 31px; text-align: right; padding-right: 5px; height: 13px; }
.lchev { margin-left: 2px; }
.l-lock { height: 24px; margin-top: 1px; }
.llock { width: 27px; }
.lockicons { display: flex; gap: 6.700px; color: #ababab; width: 89px; }
.lockicons svg { width: 11px; height: 11px; }
.lfill { margin-left: 8px; width: 14px; }
.layers { margin-top: 2px; padding-right: 13px; }
.layer { height: 27px; display: flex; align-items: center; position: relative; border-bottom: 1px solid #2b2b2b; padding-left: 27px; }
.layer.sel { background: linear-gradient(to right,#333 0 25px,#4b4b4b 25px); height: 26px; }
.eye { position: absolute; left: 7px; top: 8px; width: 12px; height: 10px; color: #d0d0d0; }
.thumb { width: 27px; height: 22px; position: relative; flex: none; }
.shapethumb { background: repeating-conic-gradient(#ccc 0 25%,#fff 0 50%) 0 0/6px 6px; border: 1px solid #ddd; }
.blob { position: absolute; left: 5px; top: 5px; width: 12px; height: 8px; border-radius: 4px; background: #ff0; }
.mark { position: absolute; right: -1px; bottom: -1px; width: 10px; height: 10px; color: #333; background: #eee; }
.whitethumb { height: 18px; width: 25px; margin-left: 1px; background: #fff; }
.lname { margin-left: 6px; font-size: 7.800px; color: #bcbcbc; }
.lname.it { font-style: italic; margin-left: 7px; }
.layerlock { position: absolute; right: 11px; top: 8px; width: 11px; height: 11px; color: #bbb; }
.lfoot { position: absolute; left: 29px; right: 21px; bottom: 0; height: 18px; display: flex; justify-content: space-between; align-items: center; color: #a8a8a8; }
.lfoot svg { width: 11px; height: 11px; }
.lfoot .dim { opacity: .4; }
.p-layers::after { content: ""; position: absolute; right: 0; top: 96px; bottom: 18px; width: 13px; background: #2e2e2e; }

/* taskbar */
.taskbar { height: 32px; flex: none; background: #030b14; display: flex; align-items: stretch; color: #fff; }
.start { width: 39px; flex: none; display: flex; align-items: center; justify-content: center; color: #fff; }
.start svg { width: 14px; height: 14px; }
.searchbox { width: 274px; flex: none; background: #f0f0f0; display: flex; align-items: center; padding-left: 8px; color: #444; font-size: 11.300px; }
.cortana { width: 15px; height: 15px; border: 2px solid #111; border-radius: 50%; margin-right: 9px; }
.micic { width: 13px; height: 15px; color: #555; margin-left: auto; margin-right: 9px; }
.tb { width: 39.300px; flex: none; display: flex; align-items: center; justify-content: center; position: relative; }
.tb-task { width: 40px; }
.taskic { width: 14px; height: 14px; color: #ddd; }
.tb.run::after { content: ""; position: absolute; left: 4px; right: 4px; bottom: 0; height: 2px; background: #7bb5d8; }
.tb.active { background: #383f47; }
.tile { width: 17px; height: 17px; border: 1.500px solid; font-size: 9.500px; font-weight: 700; line-height: 14px; text-align: center; }
.ae { color: #b2a3ff; border-color: #7c4fd8; background: #1d0a3a; }
.ai { color: #ff9a2e; border-color: #b5622a; background: #2c1300; }
.dw { color: #7ce03a; border-color: #63c22a; background: #0c2103; }
.xd { color: #f4d4ea; border-color: #8c2a6c; background: #2b0720; }
.pr { color: #cd9bf5; border-color: #a35ad0; background: #22072e; }
.ps { color: #3fb2e2; border-color: #2b8fb8; background: #061e2e; }
.au { color: #2fd0a8; border-color: #1e9f80; background: #021f1a; }
.chrome, .explorer, .edge { width: 19px; height: 19px; }
.rec { width: 18px; height: 18px; border-radius: 50%; background: #f3e6dc; display: flex; align-items: center; justify-content: center; }
.rec i { width: 10px; height: 10px; border-radius: 50%; background: #e2521e; }
.stopbtn { width: 30px; flex: none; background: #8b8b8b; display: flex; align-items: center; justify-content: center; margin-left: 5px; }
.stopbtn i { width: 15px; height: 15px; background: #d83a0a; }
.recbar { display: flex; flex: none; width: 210px; background: #8c8c8c; }
.rb-col { display: flex; flex-direction: column; }
.alarm { width: 17px; height: 16px; background: #a08e8c; display: flex; align-items: center; justify-content: center; }
.alarm i { width: 11px; height: 11px; border-radius: 50%; background: #f2f2f2; border: 2px solid #c8372f; }
.pause { width: 17px; height: 16px; background: linear-gradient(to right,transparent 4px,#3a8fd0 4px 7px,transparent 7px 10px,#3a8fd0 10px 13px,transparent 13px),#b8c6d0; }
.timer { width: 57px; background: #000; color: #3f9c55; font-family: "Liberation Mono","DejaVu Sans Mono",monospace; font-size: 15px; line-height: 32px; text-align: center; letter-spacing: -1px; white-space: nowrap; overflow: hidden; }
.vols { width: 59px; }
.vol { height: 16px; background: linear-gradient(#dce6ee,#b8c6d0); display: flex; align-items: center; padding-left: 3px; color: #3d7fb5; }
.vol svg { width: 12px; height: 12px; }
.bars { width: 41px; height: 13px; margin-left: 2px; background: linear-gradient(#2d7fd0,#2d7fd0) right/4px 100% no-repeat, repeating-linear-gradient(to right,#333 0 2px,transparent 2px 3.500px); clip-path: polygon(0 100%,100% 0,100% 100%); }
.bars.green { background: linear-gradient(#2d7fd0,#2d7fd0) right/4px 100% no-repeat, repeating-linear-gradient(to right,#2e9e3a 0 2px,transparent 2px 3.500px); }
.rb-grid { display: grid; grid-template-columns: repeat(5,1fr); grid-auto-rows: 16px; flex: 1; }
.rb { background: #d9dfe4; border: 1px solid #a8b0b6; font-size: 9px; line-height: 14px; text-align: center; color: #444; display: flex; align-items: center; justify-content: center; }
.rb-dot { display: block; width: 9px; height: 9px; border-radius: 50%; border: 2px solid #3a8fd0; }
.rb-box { display: block; width: 9px; height: 8px; border: 1px solid #333; }
.rb-mon { display: block; width: 10px; height: 8px; background: #333; }
.blue { background: #9fd0ee; }
.yellow { background: linear-gradient(#f3d24a,#e2b020); }
.gear { background: #8fa8b8; }
.blue2 { background: #a7c3d8; color: #3a7cc0; }
.red { background: #d8b8b0; color: #d01818; font-weight: 700; }
.cam { background: #7aa8c8; }
.dark { background: #c4c8cc; }
.lite { background: #eceff0; }
.tray { flex: 1; display: flex; align-items: center; position: relative; padding-left: 17px; color: #e0e0e0; }
.caret { width: 8px; height: 8px; border-left: 1px solid #ddd; border-top: 1px solid #ddd; transform: rotate(45deg); margin-top: 4px; }
.tr-cloud { width: 14px; height: 10px; margin-left: 9px; color: #eee; }
.tr-ic { width: 14px; height: 14px; margin-left: 6px; }
.eng { font-size: 9.300px; margin-left: 6px; }
.clock { display: flex; flex-direction: column; align-items: center; font-size: 9.300px; line-height: 14px; margin-left: 9px; width: 44px; }
.tr-notify { width: 13px; height: 13px; margin-left: 15px; }
```
